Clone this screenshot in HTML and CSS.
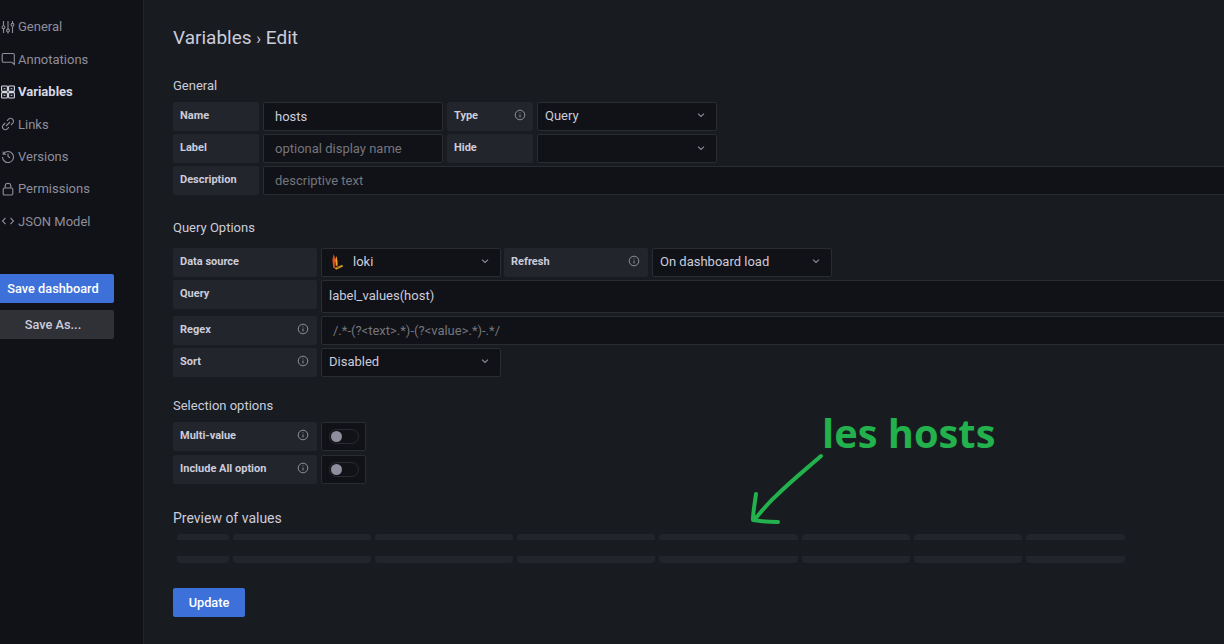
FILE: index.html
```html
<!DOCTYPE html>
<html lang="en">
<head>
<meta charset="utf-8">
<title>Variables › Edit</title>
<link rel="stylesheet" href="styles.css">
</head>
<body>
<div class="app">
  <nav class="side">
    <a class="nav-item"><svg class="nav-icon" viewBox="0 0 14 14"><path d="M2.5 1v4.5M2.5 9v4M7 1v8M7 12v1.500M11.500 1v2M11.500 6.500V13"/><circle cx="2.500" cy="7.200" r="1.400"/><circle cx="7" cy="10.500" r="1.400"/><circle cx="11.500" cy="4.800" r="1.400"/></svg>General</a>
    <a class="nav-item"><svg class="nav-icon" viewBox="0 0 14 14"><path d="M2.500 1.500h9.500a1.300 1.300 0 0 1 1.300 1.300v9.700l-2.600-2.300H2.500a1.300 1.300 0 0 1-1.300-1.300V2.800a1.300 1.300 0 0 1 1.300-1.300z"/></svg>Annotations</a>
    <a class="nav-item is-active"><svg class="nav-icon" viewBox="0 0 14 14"><rect x=".6" y="1" width="5.800" height="5.400" rx=".8"/><rect x="7.600" y="1" width="5.800" height="5.400" rx=".8"/><rect x=".6" y="7.600" width="5.800" height="5.400" rx=".8"/><rect x="7.600" y="7.600" width="5.800" height="5.400" rx=".8"/><path d="M2.600 3.700h1.800M9.600 3.700h1.800M2.600 10.300h1.800M9.600 10.300h1.800"/></svg>Variables</a>
    <a class="nav-item"><svg class="nav-icon" viewBox="0 0 14 14"><path d="M6 3.800l1.600-1.600a2.600 2.600 0 0 1 3.900 0 2.700 2.700 0 0 1 .3 3.900L10 8M8 10.200l-1.700 1.600a2.600 2.600 0 0 1-3.900 0 2.700 2.700 0 0 1-.1-3.800L4.200 6M5 9l4-4"/></svg>Links</a>
    <a class="nav-item"><svg class="nav-icon" viewBox="0 0 14 14"><path d="M2.200 2.500v2.800H5M2.300 5.200A5.500 5.500 0 1 1 1.500 8M7 4.500v3l2 1.200"/></svg>Versions</a>
    <a class="nav-item"><svg class="nav-icon" viewBox="0 0 14 14"><rect x="2.200" y="6" width="9.600" height="7" rx="1.200"/><path d="M4.200 6V4a2.800 2.800 0 0 1 5.600 0v2"/></svg>Permissions</a>
    <a class="nav-item"><svg class="nav-icon" viewBox="0 0 14 14"><path d="M4.500 3.800L1.500 7l3 3.200M9.500 3.800l3 3.200-3 3.200"/></svg>JSON Model</a>
    <div class="side-actions">
      <button class="btn btn-primary btn-save">Save dashboard</button>
      <button class="btn btn-secondary btn-save">Save As...</button>
    </div>
  </nav>

  <main class="main">
    <h1 class="title">Variables <span class="crumb">›</span> Edit</h1>

    <h2 class="section section-first">General</h2>
    <div class="row">
      <div class="lab lab-sm">Name</div>
      <div class="field w180 val pad-ph">hosts</div>
      <div class="lab lab-sm">Type<svg class="info" viewBox="0 0 12 12"><circle cx="6" cy="6" r="4.800"/><path d="M6 5.500v3M6 3.400v.8"/></svg></div>
      <div class="field w180 val sel lift">Query<svg class="chev" viewBox="0 0 10 10"><path d="M2 3.700l3 2.800 3-2.800"/></svg></div>
    </div>
    <div class="row">
      <div class="lab lab-sm">Label</div>
      <div class="field w180 ph">optional display name</div>
      <div class="lab lab-sm">Hide</div>
      <div class="field w180 sel"><svg class="chev" viewBox="0 0 10 10"><path d="M2 3.700l3 2.800 3-2.800"/></svg></div>
    </div>
    <div class="row">
      <div class="lab lab-sm">Description</div>
      <div class="field wide ph">descriptive text</div>
    </div>

    <h2 class="section section-query">Query Options</h2>
    <div class="row">
      <div class="lab lab-lg">Data source</div>
      <div class="field w180 val sel lift"><svg class="loki" viewBox="0 0 14 18"><path class="l1" d="M3 1l1.500 5-.5 9 1.500 1.500L2.500 16 1.500 7z"/><path class="l2" d="M6 3l1 6 .2 4 -2 1L4.500 7z"/><path class="l3" d="M4 16l8-3.500 1 1.800L5.500 18z"/><path class="l4" d="M6 13l3 2-2.500 1z"/></svg>loki<svg class="chev" viewBox="0 0 10 10"><path d="M2 3.700l3 2.800 3-2.800"/></svg></div>
      <div class="lab lab-refresh">Refresh<svg class="info" viewBox="0 0 12 12"><circle cx="6" cy="6" r="4.800"/><path d="M6 5.500v3M6 3.400v.8"/></svg></div>
      <div class="field w180 val sel lift">On dashboard load<svg class="chev" viewBox="0 0 10 10"><path d="M2 3.700l3 2.800 3-2.800"/></svg></div>
    </div>
    <div class="row row-query">
      <div class="lab lab-lg">Query</div>
      <div class="field wide val lift">label_values(host)</div>
    </div>
    <div class="row">
      <div class="lab lab-lg">Regex<svg class="info" viewBox="0 0 12 12"><circle cx="6" cy="6" r="4.800"/><path d="M6 5.500v3M6 3.400v.8"/></svg></div>
      <div class="field wide ph">/.*-(?&lt;text&gt;.*)-(?&lt;value&gt;.*)-.*/</div>
    </div>
    <div class="row">
      <div class="lab lab-lg">Sort<svg class="info" viewBox="0 0 12 12"><circle cx="6" cy="6" r="4.800"/><path d="M6 5.500v3M6 3.400v.8"/></svg></div>
      <div class="field w180 val sel lift">Disabled<svg class="chev" viewBox="0 0 10 10"><path d="M2 3.700l3 2.800 3-2.800"/></svg></div>
    </div>

    <h2 class="section section-select">Selection options</h2>
    <div class="row row-switch">
      <div class="lab lab-lg">Multi-value<svg class="info" viewBox="0 0 12 12"><circle cx="6" cy="6" r="4.800"/><path d="M6 5.500v3M6 3.400v.8"/></svg></div>
      <div class="field switch-box"><span class="switch"><span class="knob"></span></span></div>
    </div>
    <div class="row row-switch">
      <div class="lab lab-lg">Include All option<svg class="info" viewBox="0 0 12 12"><circle cx="6" cy="6" r="4.800"/><path d="M6 5.500v3M6 3.400v.8"/></svg></div>
      <div class="field switch-box"><span class="switch"><span class="knob"></span></span></div>
    </div>

    <h2 class="preview-title">Preview of values</h2>
    <div class="chips chips-top">
      <i class="c1"></i><i class="c2"></i><i class="c2"></i><i class="c3"></i><i class="c3"></i><i class="c4"></i><i class="c4"></i><i class="c5"></i>
    </div>
    <div class="chips chips-bottom">
      <i class="c1"></i><i class="c2"></i><i class="c2"></i><i class="c3"></i><i class="c3"></i><i class="c4"></i><i class="c4"></i><i class="c5"></i>
    </div>

    <button class="btn btn-primary btn-update">Update</button>
  </main>
</div>

<div class="note">les hosts</div>
<svg class="note-arrow" viewBox="0 0 80 74"><path d="M71 4C55 18 40 30 26 44 18 51 12 59 4 68M6 42C5 50 3 60 3 68 9 69 20 70 28 70"/></svg>
</body>
</html>
```
FILE: styles.css
```css
* { box-sizing: border-box; }
html, body { margin: 0; height: 100%; overflow: hidden; }
body {
  background: #181b1f;
  color: #ccccdc;
  font-family: Roboto, "Liberation Sans", sans-serif;
  font-size: 13px;
}
.app { display: flex; height: 644px; }

.side {
  flex: none;
  width: 144px;
  background: #111217;
  border-right: 1px solid #22252b;
  padding: 10.700px 0 0 1px;
  display: flex;
  flex-direction: column;
}
.nav-item {
  display: flex;
  align-items: center;
  gap: 3px;
  height: 32.400px;
  font-size: 13px;
  color: #8e8e9c;
  white-space: nowrap;
}
.nav-item.is-active { color: #d8d9e6; font-weight: 700; }
.nav-icon {
  flex: none;
  width: 14px;
  height: 14px;
  fill: none;
  stroke: currentColor;
  stroke-width: 1.100;
}
.side-actions {
  margin: 36.800px 0 0 -9px;
  display: flex;
  flex-direction: column;
  gap: 7px;
}

.btn {
  border: 0;
  border-radius: 2px;
  font-family: inherit;
  font-size: 12.750px;
  font-weight: 500;
  height: 29px;
  padding: 0;
}
.btn-primary { background: #3d71d9; color: #fff; }
.btn-secondary { background: #2f3136; color: #ccccdc; }
.btn-save { width: 122px; display: block; }

.main {
  flex: 1;
  min-width: 0;
  padding: 26px 0 0 29px;
  overflow: hidden;
}
.title {
  margin: 0;
  font-size: 19px;
  line-height: 24px;
  font-weight: 400;
  color: #ccccdc;
}
.crumb { font-size: 16px; }
.section, .preview-title {
  margin: 0;
  font-weight: 400;
  font-size: 13px;
  line-height: 16px;
  color: #ccccdc;
}
.section-first { margin-top: 27px; margin-bottom: 8px; }
.section-query { margin-top: 25.200px; margin-bottom: 12px; }
.section-select { margin-top: 21.200px; margin-bottom: 8px; }
.preview-title { font-size: 14px; margin-top: 26px; margin-bottom: 8px; }

.row {
  display: flex;
  gap: 4px;
  height: 28.800px;
  margin-bottom: 3.200px;
  width: 1400px;
}
.row-query { height: 32.800px; }
.row-switch { height: 29px; margin-bottom: 4px; }

.lab {
  flex: none;
  height: 100%;
  background: #22252b;
  border-radius: 2px;
  padding: 0 7px 2px;
  display: flex;
  align-items: center;
  justify-content: space-between;
  font-size: 11px;
  font-weight: 700;
  color: #ccccdc;
  white-space: nowrap;
}
.lab-sm { width: 86px; }
.lab-lg { width: 144px; padding-right: 8px; }
.lab-refresh { width: 144px; margin-left: -1px; padding-right: 8px; }
.row-query .lab { height: 29px; }

.info {
  flex: none;
  width: 12px;
  height: 12px;
  fill: none;
  stroke: #8e8e9c;
  stroke-width: 1;
}
.field {
  flex: none;
  height: 100%;
  background: #111217;
  border: 1px solid #2a2c32;
  border-radius: 2px;
  padding: 0 7px;
  display: flex;
  align-items: center;
  font-size: 13px;
  white-space: nowrap;
}
.w180 { width: 180px; }
.wide { width: 1000px; }
.val { color: #ccccdc; }
.lift { padding-bottom: 2px; }
.pad-ph { padding-left: 11px; }
.ph { color: #74757d; padding-left: 11px; }
.sel { padding-right: 10px; }
.chev { flex: none; width: 10px; height: 10px; margin-left: auto; fill: none; stroke: #8e8e9c; stroke-width: 1.100; }
.loki { flex: none; width: 13px; height: 17px; margin: 0 9px 0 2px; }
.l1 { fill: #d9541e; }
.l2 { fill: #f0a030; }
.l3 { fill: #c89a20; }
.l4 { fill: #8a4a12; }

.switch-box { width: 45px; padding: 0 0 0 7px; }
.switch {
  display: block;
  width: 30px;
  height: 15px;
  border: 1px solid #2a2c32;
  border-radius: 8px;
  background: #111217;
  position: relative;
}
.knob {
  position: absolute;
  left: 1px;
  top: 1px;
  width: 11px;
  height: 11px;
  border-radius: 50%;
  background: #8e8e9c;
}

.chips {
  display: flex;
  gap: 4px;
  margin-left: 4px;
  width: 948px;
}
.chips i { display: block; background: #22252b; }
.chips-top i { height: 6px; border-radius: 4px 4px 0 0; }
.chips-bottom { margin-top: 16px; }
.chips-bottom i { height: 7px; border-radius: 0 0 4px 4px; }
.c1 { width: 52px; }
.c2 { width: 138px; }
.c3 { width: 139px; }
.c4 { width: 108px; }
.c5 { width: 99px; }

.btn-update { display: block; width: 72px; margin-top: 25px; }

.note {
  position: absolute;
  left: 822px;
  top: 405px;
  font-family: "Open Sans", sans-serif;
  font-size: 39.800px;
  line-height: 56px;
  font-weight: 700;
  color: #22b14c;
  white-space: nowrap;
}
.note-arrow {
  position: absolute;
  left: 750px;
  top: 452px;
  width: 80px;
  height: 74px;
  fill: none;
  stroke: #22b14c;
  stroke-width: 4;
  stroke-linecap: round;
  stroke-linejoin: round;
}
```
